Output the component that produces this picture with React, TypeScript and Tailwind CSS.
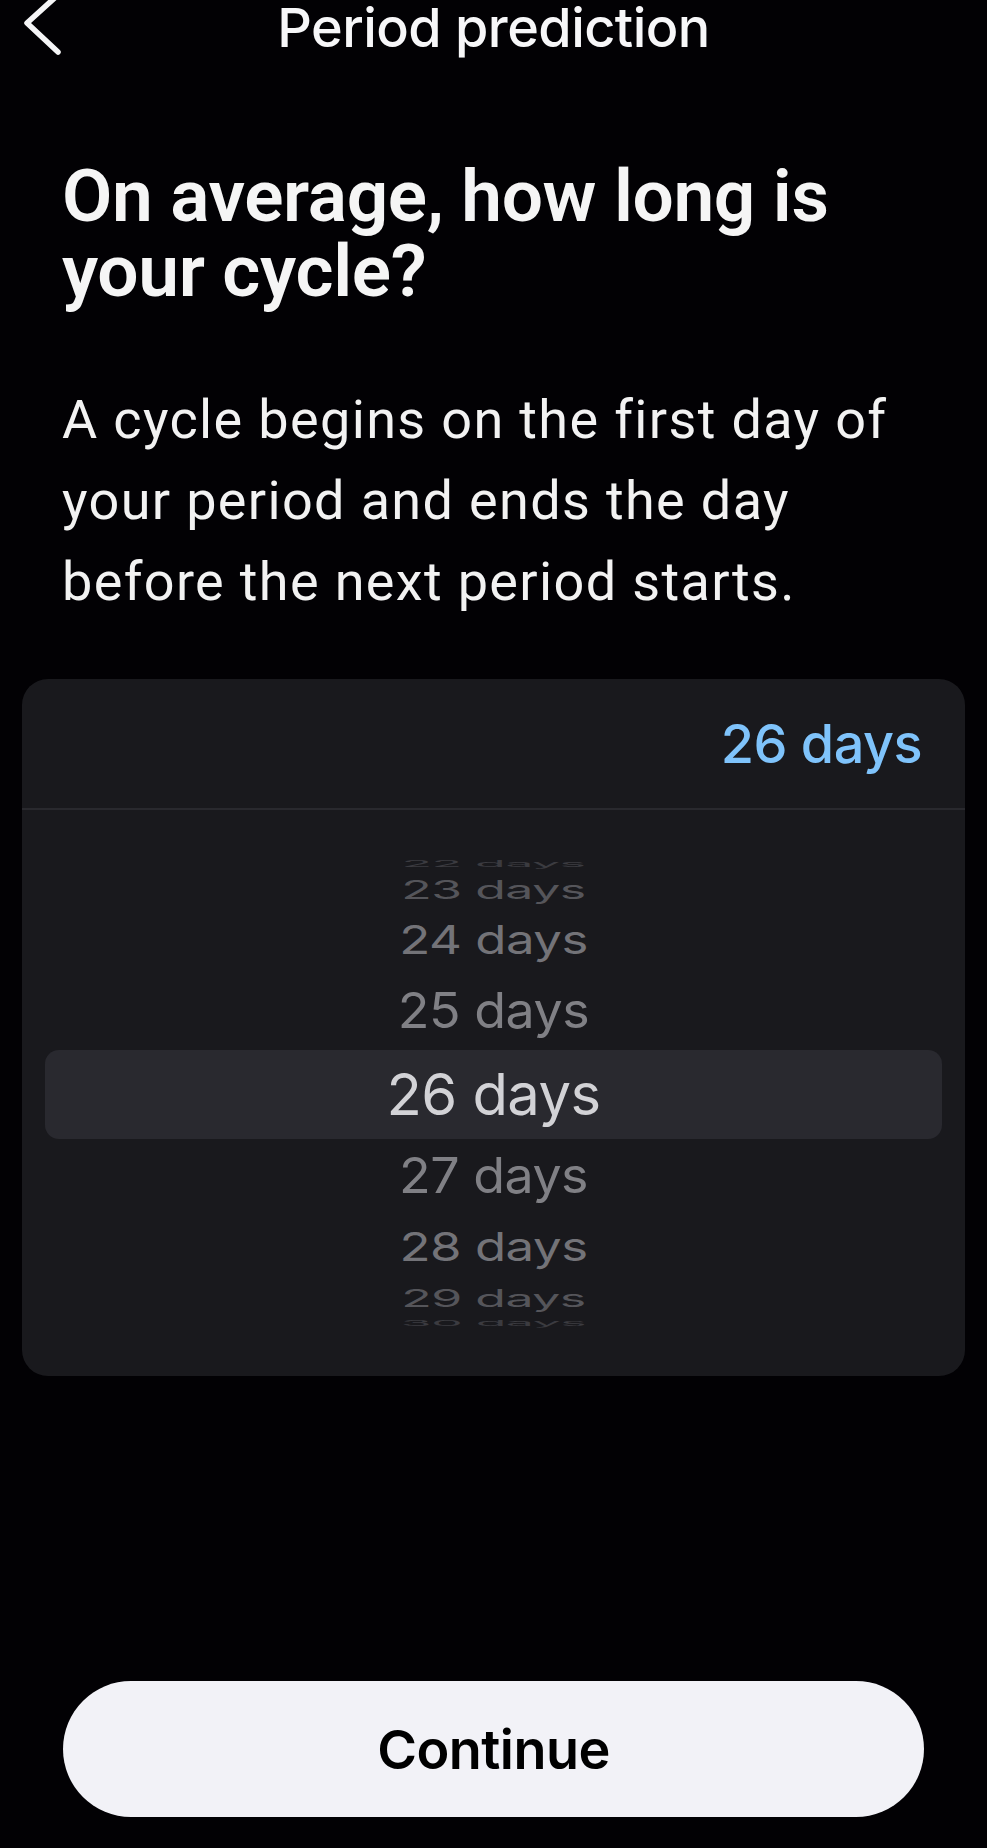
import { useState } from "react";

const wheel = [
  { label: "22 days", h: "h-[16px]", cls: "text-[50px] scale-y-[0.18] text-[#3b3b40]" },
  { label: "23 days", h: "h-[36px]", cls: "text-[50px] scale-y-[0.5] text-[#55555a]" },
  { label: "24 days", h: "h-[64px]", cls: "text-[51px] scale-y-[0.78] text-[#737378]" },
  { label: "25 days", h: "h-[78px]", cls: "text-[52px] scale-y-[0.96] text-[#808085]" },
  { label: "26 days", h: "", cls: "", selected: true },
  { label: "27 days", h: "h-[74px]", cls: "text-[52px] scale-y-[0.96] text-[#808085]" },
  { label: "28 days", h: "h-[68px]", cls: "text-[51px] scale-y-[0.78] text-[#737378]" },
  { label: "29 days", h: "h-[34px]", cls: "text-[50px] scale-y-[0.48] text-[#55555a]" },
  { label: "30 days", h: "h-[16px]", cls: "text-[50px] scale-y-[0.16] text-[#3b3b40]" },
];

function BackChevron() {
  return (
    <svg width="42" height="64" viewBox="0 0 42 64" className="overflow-visible -mt-[8px]">
      <polyline
        points="38,2 6,31 37,60"
        fill="none"
        stroke="#f5f5f7"
        strokeWidth="5.5"
        strokeLinecap="round"
        strokeLinejoin="round"
      />
    </svg>
  );
}

export default function App() {
  const [days] = useState(26);

  return (
    <div className="w-full h-[1848px] bg-[#020104] overflow-hidden flex flex-col">
      {/* nav bar */}
      <div className="grid grid-cols-[1fr_auto_1fr] items-center h-[54px] px-[21px]">
        <div className="flex items-center">
          <BackChevron />
        </div>
        <h1 className="font-['Inter',sans-serif] font-medium text-[54px] leading-[54px] text-[#f7f7f9] tracking-[-0.01em]">
          Period prediction
        </h1>
        <div />
      </div>

      <div className="px-[62px]">
        <h2 className="mt-[105px] font-['Roboto',sans-serif] font-semibold text-[73px] leading-[75px] text-[#f5f5f5] tracking-[-0.005em]">
          On average, how long is your cycle?
        </h2>
        <p className="mt-[70px] w-[860px] font-['Roboto',sans-serif] text-[54px] leading-[81px] text-[#f2f2f2] tracking-[0.025em]">
          A cycle begins on the first day of your period and ends the day before
          the next period starts.
        </p>
      </div>

      {/* picker card */}
      <div className="mt-[57px] mx-[22px] h-[697px] rounded-[26px] bg-[#19191d] flex flex-col font-['Inter',sans-serif]">
        <div className="h-[131px] flex items-center justify-end pr-[43px] border-b-2 border-[#29292e]">
          <span className="text-[54px] leading-none font-medium text-[#7fc3fb] tracking-[-0.01em]">
            {days} days
          </span>
        </div>
        <div className="flex-1 flex flex-col justify-center">
          {wheel.map((r) =>
            r.selected ? (
              <div
                key={r.label}
                className="h-[89px] mx-[23px] rounded-[14px] bg-[#29292f] flex items-center justify-center"
              >
                <span className="text-[58px] leading-none text-[#d2d2d6] tracking-[-0.01em]">
                  {r.label}
                </span>
              </div>
            ) : (
              <div key={r.label} className={`flex items-center justify-center ${r.h}`}>
                <span className={`leading-none tracking-[-0.01em] ${r.cls}`}>{r.label}</span>
              </div>
            ),
          )}
        </div>
      </div>

      {/* continue */}
      <div className="mt-[305px] px-[63px]">
        <button
          type="button"
          className="w-full h-[136px] rounded-full bg-[#f2f2f7] text-black font-['Inter',sans-serif] font-semibold text-[54px] tracking-[-0.01em]"
        >
          Continue
        </button>
      </div>
    </div>
  );
}
